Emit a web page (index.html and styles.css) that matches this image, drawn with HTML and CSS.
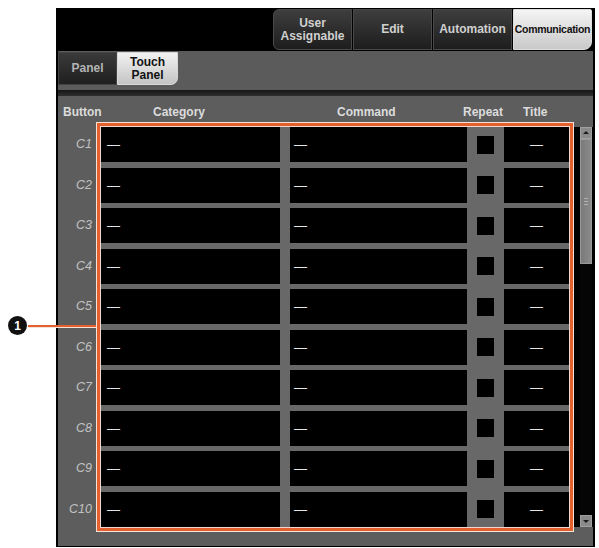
FILE: index.html
```html
<!DOCTYPE html>
<html lang="en">
<head>
    <meta charset="UTF-8">
    <meta name="viewport" content="width=device-width, initial-scale=1.0">
    <title>Touch Panel</title>
    <link rel="stylesheet" href="styles.css">
</head>
<body>
    <div class="callout">
        <span class="callout-num">1</span>
        <span class="callout-line"></span>
    </div>

    <div class="device">
        <div class="topbar">
            <div class="tab first">User<br>Assignable</div>
            <div class="tab">Edit</div>
            <div class="tab">Automation</div>
            <div class="tab last active">Communication</div>
        </div>

        <div class="subbar">
            <div class="subtab">Panel</div>
            <div class="subtab active">Touch<br>Panel</div>
        </div>
        <div class="divider"></div>

        <div class="panel">
            <div class="heads">
                <span class="h-button">Button</span>
                <span class="h-category">Category</span>
                <span class="h-command">Command</span>
                <span class="h-repeat">Repeat</span>
                <span class="h-title">Title</span>
            </div>

            <div class="body">
                <div class="labels">
                    <div class="lab">C1</div>
                    <div class="lab">C2</div>
                    <div class="lab">C3</div>
                    <div class="lab">C4</div>
                    <div class="lab">C5</div>
                    <div class="lab">C6</div>
                    <div class="lab">C7</div>
                    <div class="lab">C8</div>
                    <div class="lab">C9</div>
                    <div class="lab">C10</div>
                </div>

                <div class="selection">
                    <div class="grid">
                        <div class="row"><div class="cell cat">—</div><div class="sep"></div><div class="cell cmd">—</div><div class="rep"><span class="box"></span></div><div class="cell ttl">—</div></div>
                        <div class="row"><div class="cell cat">—</div><div class="sep"></div><div class="cell cmd">—</div><div class="rep"><span class="box"></span></div><div class="cell ttl">—</div></div>
                        <div class="row"><div class="cell cat">—</div><div class="sep"></div><div class="cell cmd">—</div><div class="rep"><span class="box"></span></div><div class="cell ttl">—</div></div>
                        <div class="row"><div class="cell cat">—</div><div class="sep"></div><div class="cell cmd">—</div><div class="rep"><span class="box"></span></div><div class="cell ttl">—</div></div>
                        <div class="row"><div class="cell cat">—</div><div class="sep"></div><div class="cell cmd">—</div><div class="rep"><span class="box"></span></div><div class="cell ttl">—</div></div>
                        <div class="row"><div class="cell cat">—</div><div class="sep"></div><div class="cell cmd">—</div><div class="rep"><span class="box"></span></div><div class="cell ttl">—</div></div>
                        <div class="row"><div class="cell cat">—</div><div class="sep"></div><div class="cell cmd">—</div><div class="rep"><span class="box"></span></div><div class="cell ttl">—</div></div>
                        <div class="row"><div class="cell cat">—</div><div class="sep"></div><div class="cell cmd">—</div><div class="rep"><span class="box"></span></div><div class="cell ttl">—</div></div>
                        <div class="row"><div class="cell cat">—</div><div class="sep"></div><div class="cell cmd">—</div><div class="rep"><span class="box"></span></div><div class="cell ttl">—</div></div>
                        <div class="row"><div class="cell cat">—</div><div class="sep"></div><div class="cell cmd">—</div><div class="rep"><span class="box"></span></div><div class="cell ttl">—</div></div>
                    </div>
                </div>

                <div class="gutter">
                    <div class="scrollbar">
                        <div class="sb-btn up"></div>
                        <div class="sb-thumb"><span class="grip"></span></div>
                        <div class="sb-track"></div>
                        <div class="sb-btn down"></div>
                    </div>
                </div>
            </div>
        </div>
    </div>
</body>
</html>
```

FILE: styles.css
```css
body {
    margin: 0;
    background: #fff;
    font-family: "Liberation Sans", Arial, sans-serif;
}

/* numbered pointer on the left */
.callout {
    position: absolute;
    left: 8px;
    top: 316px;
}
.callout-num {
    display: flex;
    align-items: center;
    justify-content: center;
    width: 19px;
    height: 19px;
    border-radius: 50%;
    background: #111;
    color: #fff;
    font-size: 12px;
    font-weight: bold;
}
.callout-line {
    position: absolute;
    left: 20px;
    top: 9px;
    width: 68px;
    height: 2px;
    background: #e4612f;
    box-shadow: 0 1px 0 #f6e3d8;
}

.device {
    margin: 8px 0 0 56px;
    width: 539px;
    height: 539px;
    box-sizing: border-box;
    padding: 0 2px 1px;
    background: #000;
    display: flex;
    flex-direction: column;
}

/* main tabs */
.topbar {
    height: 43px;
    box-sizing: border-box;
    padding: 1px 1px 1px 0;
    display: flex;
    justify-content: flex-end;
    gap: 1px;
}
.tab {
    width: 79px;
    box-sizing: border-box;
    display: flex;
    align-items: center;
    justify-content: center;
    text-align: center;
    font-size: 12px;
    line-height: 13px;
    font-weight: bold;
    color: #d0d0d0;
    background: linear-gradient(#3e3e3e, #1d1d1d);
    border: 1px solid #4a4a4a;
}
.tab.first {
    border-radius: 6px 0 0 6px;
}
.tab.last {
    border-radius: 0 2px 8px 0;
}
.tab.active {
    background: linear-gradient(#f4f4f4, #c9c9c9);
    border-color: #ddd;
    color: #111;
    font-size: 10.5px;
    letter-spacing: -0.3px;
}

/* sub tabs */
.subbar {
    height: 39px;
    box-sizing: border-box;
    padding-top: 1px;
    background: #5b5b5b;
    display: flex;
    align-items: flex-start;
}
.subtab {
    width: 59px;
    height: 33px;
    box-sizing: border-box;
    display: flex;
    align-items: center;
    justify-content: center;
    text-align: center;
    font-size: 12px;
    line-height: 13px;
    font-weight: bold;
    color: #b4b4b4;
    background: linear-gradient(#3a3a3a, #1f1f1f);
    border: 1px solid #444;
}
.subtab.active {
    width: 61px;
    color: #111;
    background: linear-gradient(#f2f2f2, #c4c4c4);
    border-color: #d8d8d8;
    border-radius: 0 0 7px 0;
}
.divider {
    height: 6px;
    background: linear-gradient(#161616, #2e2e2e);
}

/* list area */
.panel {
    flex: 1;
    background: #5d5d5d;
}
.heads {
    height: 27px;
    box-sizing: border-box;
    padding: 0 0 4px 5px;
    display: flex;
    align-items: flex-end;
    font-size: 12px;
    line-height: 14px;
    font-weight: bold;
    color: #dcdcdc;
}
.h-button { width: 90px; }
.h-category { width: 184px; }
.h-command { width: 126px; }
.h-repeat { width: 60px; }

.body {
    display: flex;
    align-items: flex-start;
}
.labels {
    width: 39px;
    box-sizing: border-box;
    padding: 4px 5px 0 0;
    display: flex;
    flex-direction: column;
    gap: 5.5px;
}
.lab {
    height: 35px;
    line-height: 35px;
    text-align: right;
    font-size: 12.5px;
    font-style: italic;
    color: #c2c2c2;
}

.selection {
    border: 3px solid #e4612f;
    outline: 1px solid #f3e2d6;
    margin-right: 1px;
}
.grid {
    width: 468px;
    border: 1px solid #efd9cc;
    background: #686868;
    display: flex;
    flex-direction: column;
    gap: 5.5px;
}
.row {
    height: 35px;
    display: flex;
}
.cell {
    background: #000;
    color: #e4e4e4;
    font-size: 13px;
    line-height: 35px;
}
.cat {
    width: 179px;
    padding-left: 6px;
    box-sizing: border-box;
}
.sep {
    width: 10px;
}
.cmd {
    width: 177px;
    padding-left: 4px;
    box-sizing: border-box;
}
.rep {
    width: 37px;
    display: flex;
    align-items: center;
    justify-content: center;
}
.box {
    width: 17px;
    height: 18px;
    background: #000;
}
.ttl {
    width: 65px;
    text-align: center;
}

/* scroll bar at the right */
.gutter {
    width: 19px;
    height: 400px;
    margin-top: 4px;
    box-sizing: border-box;
    padding: 0 1px 0 6px;
    background: #000;
}
.scrollbar {
    height: 100%;
    display: flex;
    flex-direction: column;
}
.sb-btn {
    height: 12px;
    box-sizing: border-box;
    background: #8a8a8a;
    border: 1px solid #a0a0a0;
    position: relative;
}
.sb-btn::after {
    content: "";
    position: absolute;
    left: 2px;
    border-left: 3px solid transparent;
    border-right: 3px solid transparent;
}
.sb-btn.up::after {
    top: 3px;
    border-bottom: 3px solid #1a1a1a;
}
.sb-btn.down::after {
    top: 4px;
    border-top: 3px solid #1a1a1a;
}
.sb-thumb {
    height: 125px;
    box-sizing: border-box;
    background: linear-gradient(90deg, #7a7a7a, #8a8a8a);
    border: 1px solid #999;
    display: flex;
    align-items: center;
    justify-content: center;
}
.grip {
    width: 4px;
    height: 5px;
    border-top: 1px solid #b0b0b0;
    border-bottom: 1px solid #b0b0b0;
    background: linear-gradient(#b0b0b0, #b0b0b0) center / 100% 1px no-repeat;
}
.sb-track {
    flex: 1;
    background: #050505;
}
```
